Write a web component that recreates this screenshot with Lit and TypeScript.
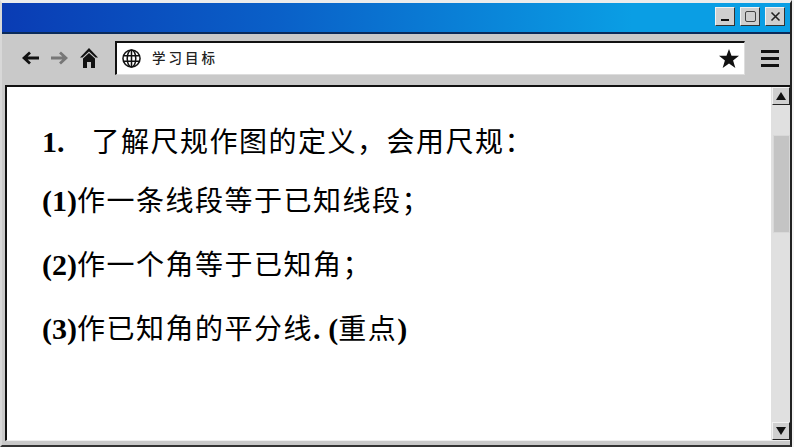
import { LitElement, html, css } from "lit";
import { customElement } from "lit/decorators.js";

@customElement("app-root")
export class AppRoot extends LitElement {
  static styles = css`
    :host { display: block; width: 794px; height: 447px; overflow: hidden; background: #f4f4f4; }
    .win { box-sizing: border-box; width: 792px; height: 447px; background: #c9c9c9; display: flex; flex-direction: column;
      border-top: 3px solid #ececec; border-left: 2px solid #d8d8d8; border-right: 2px solid #222; border-bottom: 2px solid #333; }
    .title { height: 31px; flex: none; background: linear-gradient(90deg, #0a3cb4, #0a60c8 35%, #0a9ee4 80%); border-bottom: 2px solid #0a2a5a;
      display: flex; justify-content: flex-end; align-items: flex-start; gap: 5px; padding: 4px 5px 0 0; box-sizing: border-box; }
    .btn { box-sizing: border-box; width: 20px; height: 19px; background: #cfcfcf; border-top: 1px solid #f2f2f2; border-left: 1px solid #f2f2f2;
      border-right: 1px solid #333; border-bottom: 1px solid #333; display: flex; align-items: center; justify-content: center; }
    .btn svg { display: block; }
    .tools { height: 51px; flex: none; display: flex; align-items: center; box-sizing: border-box; padding: 0 0 3px 20px; }
    .nav { display: flex; align-items: center; gap: 12px; width: 93px; flex: none; }
    .addr { box-sizing: border-box; width: 630px; height: 34px; background: #fff; border-top: 2px solid #111; border-left: 2px solid #111;
      border-right: 1px solid #ddd; border-bottom: 1px solid #ddd; display: flex; align-items: center; padding: 0 5px 0 5px; flex: none; }
    .url { margin-left: 11px; padding-bottom: 3px; flex: 1; font: 500 13.500px "Noto Sans CJK SC", sans-serif; letter-spacing: 3px; color: #222; }
    .menu { margin-left: 16px; display: flex; flex-direction: column; gap: 4px; }
    .menu i { display: block; width: 18px; height: 3px; background: #111; }
    .view { flex: 1; min-height: 0; display: flex; margin: 0 0 4px 3px; background: #fff; border-top: 2px solid #111; border-left: 2px solid #111;
      border-bottom: 1px solid #eee; }
    .page { flex: 1; background: #fff; color: #000; font: 28px/40px "Noto Sans CJK SC", sans-serif; letter-spacing: 1.500px; padding: 33px 0 0 35px; }
    .page p { margin: 0 0 24px; height: 40px; white-space: nowrap; }
    .page p:nth-child(1) { margin-bottom: 19px; }
    b { font-family: "Liberation Serif", serif; font-size: 30px; font-weight: 700; letter-spacing: 0; }
    .num { margin-right: 27px; }
    .sb { width: 19px; flex: none; background: #e0e0e0; display: flex; flex-direction: column; }
    .arrow { box-sizing: border-box; height: 18px; width: 18px; margin-left: 1px; background: #cfcfcf; flex: none; border-top: 1px solid #f2f2f2; border-left: 1px solid #f2f2f2;
      border-right: 1px solid #222; border-bottom: 1px solid #222; display: flex; align-items: center; justify-content: center; }
    .track { flex: 1; padding-top: 30px; }
    .thumb { box-sizing: border-box; height: 98px; width: 17px; margin-left: 2px; background: #c4c4c4; border: 1px solid #d8d8d8; }
  `;

  render() {
    return html`<div class="win">
      <div class="title">
        <div class="btn"><svg width="11" height="11" viewBox="0 0 11 11"><rect x="1" y="8" width="8" height="2" fill="#111"/></svg></div>
        <div class="btn"><svg width="11" height="11" viewBox="0 0 11 11"><rect x=".5" y=".5" width="10" height="10" rx="1.500" fill="none" stroke="#444" stroke-width="1"/></svg></div>
        <div class="btn"><svg width="11" height="11" viewBox="0 0 11 11"><path d="M1.500 1.500l8 8M9.500 1.500l-8 8" stroke="#222" stroke-width="1.600"/></svg></div>
      </div>
      <div class="tools">
        <div class="nav">
          <svg width="17" height="14" viewBox="0 0 17 14"><path d="M17 7H3M8 1.500 2 7l6 5.500" fill="none" stroke="#111" stroke-width="2.800"/></svg>
          <svg width="17" height="14" viewBox="0 0 17 14"><path d="M0 7h14M9 1.500 15 7l-6 5.500" fill="none" stroke="#777" stroke-width="2.800"/></svg>
          <svg width="18" height="20" viewBox="0 0 18 20"><path d="M9 0 0 9.500h2.500L9 3.500l6.500 6H18z" fill="#111"/><path d="M3 10.500 9 5l6 5.500V20h-4v-6H7v6H3z" fill="#111"/></svg>
        </div>
        <div class="addr">
          <svg width="19" height="19" viewBox="0 0 20 20" fill="none" stroke="#111" stroke-width="1.600"><circle cx="10" cy="10" r="9"/><ellipse cx="10" cy="10" rx="4.500" ry="9"/><path d="M10 1v18M1.500 7h17M1.500 13h17"/></svg>
          <div class="url">学习目标</div>
          <svg width="20" height="21" viewBox="0 0 22 21"><path d="M11 0l2.800 7.600H22l-6.500 5 2.500 8.400-7-5-7 5 2.500-8.400L0 7.600h8.200z" fill="#111"/></svg>
        </div>
        <div class="menu"><i></i><i></i><i></i></div>
      </div>
      <div class="view">
        <div class="page">
          <p><b class="num">1.</b>了解尺规作图的定义，会用尺规：</p>
          <p><b>(1)</b>作一条线段等于已知线段；</p>
          <p><b>(2)</b>作一个角等于已知角；</p>
          <p><b>(3)</b>作已知角的平分线<b>.</b> <b>(</b>重点<b>)</b></p>
        </div>
        <div class="sb">
          <div class="arrow"><svg width="10" height="8" viewBox="0 0 10 8"><path d="M5 0l5 8H0z" fill="#111"/></svg></div>
          <div class="track"><div class="thumb"></div></div>
          <div class="arrow"><svg width="10" height="8" viewBox="0 0 10 8"><path d="M5 8l5-8H0z" fill="#111"/></svg></div>
        </div>
      </div>
    </div>`;
  }
}
